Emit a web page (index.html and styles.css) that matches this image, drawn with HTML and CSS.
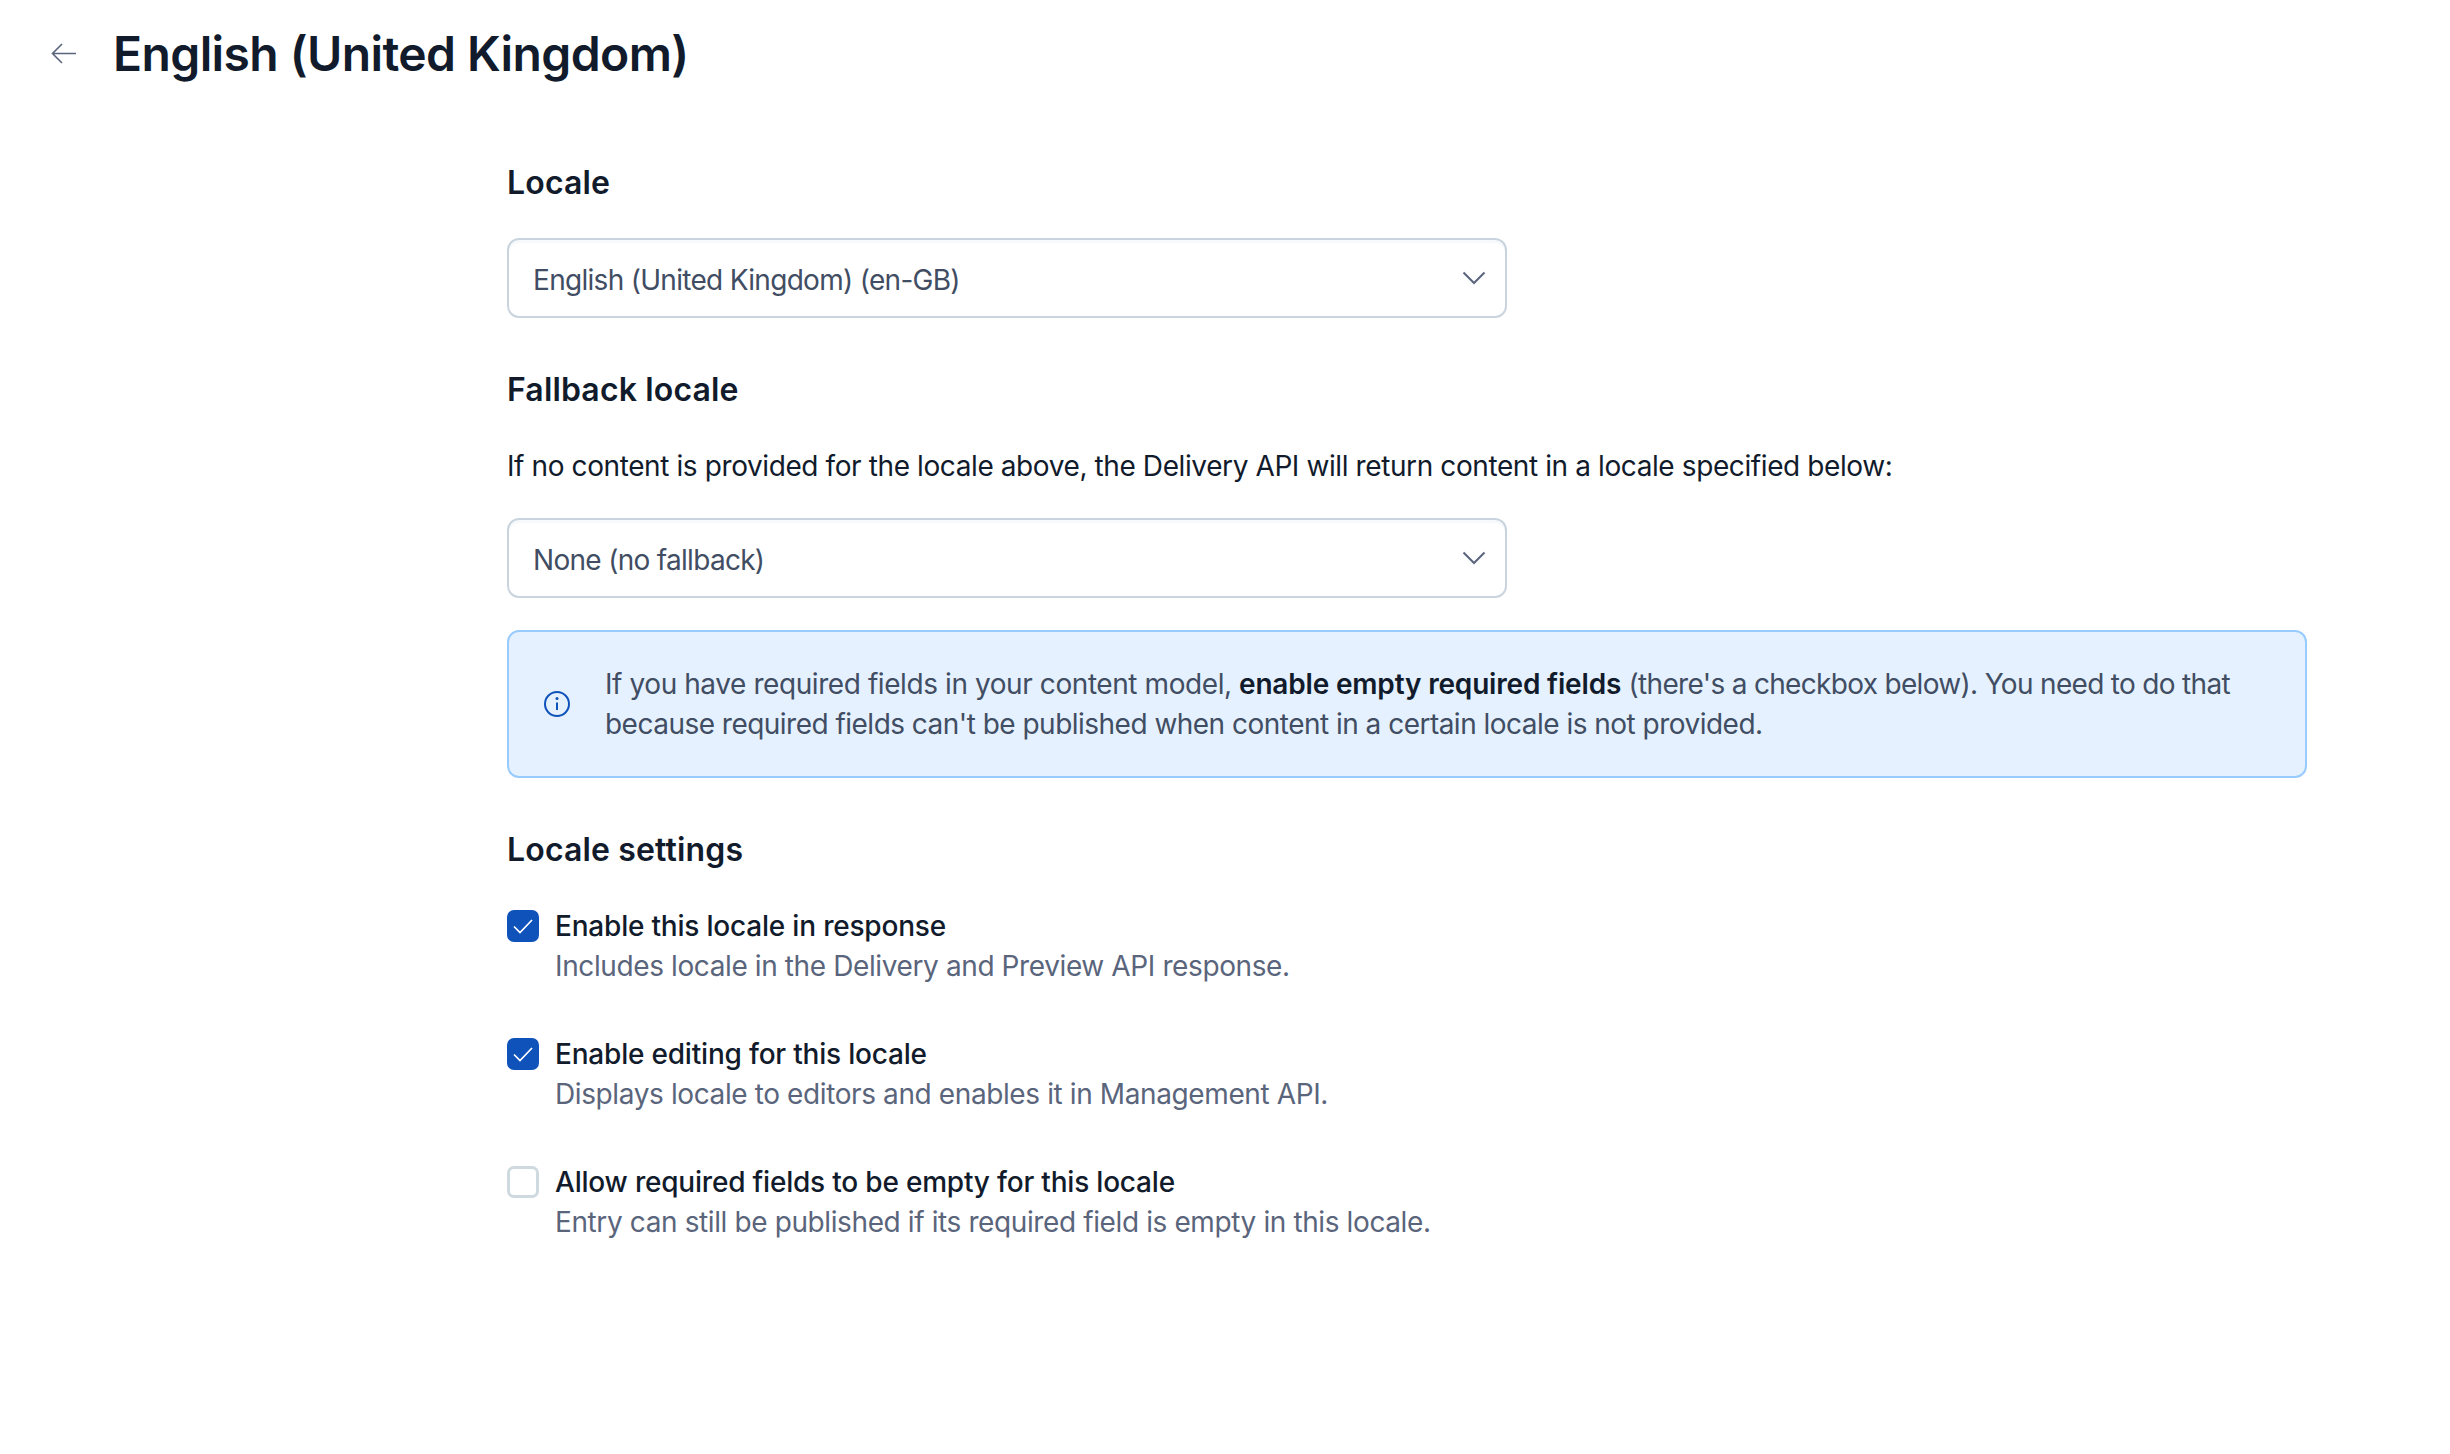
FILE: index.html
```html
<!DOCTYPE html>
<html lang="en">
<head>
<meta charset="utf-8">
<title>English (United Kingdom)</title>
<link rel="stylesheet" href="styles.css">
</head>
<body>
<header class="top">
  <svg class="back" viewBox="0 0 32 32" fill="none"><path d="M28 15.500H4.500M14 6L4.500 15.500l9.500 9.500" stroke="#5a657c" stroke-width="1.600"/></svg>
  <h1 class="title">English (United Kingdom)</h1>
</header>
<main class="form">
  <h2 class="head head-first">Locale</h2>
  <div class="select"><span>English (United Kingdom) (en-GB)</span><svg class="chev" viewBox="0 0 24 14" fill="none"><path d="M1.500 1.500L12 12 22.500 1.500" stroke="#5a657c" stroke-width="2"/></svg></div>
  <h2 class="head head-fallback">Fallback locale</h2>
  <p class="intro">If no content is provided for the locale above, the Delivery API will return content in a locale specified below:</p>
  <div class="select"><span>None (no fallback)</span><svg class="chev" viewBox="0 0 24 14" fill="none"><path d="M1.500 1.500L12 12 22.500 1.500" stroke="#5a657c" stroke-width="2"/></svg></div>
  <div class="note">
    <svg class="info" viewBox="0 0 28 28" fill="none"><circle cx="14" cy="14" r="12" stroke="#0f52ba" stroke-width="2"/><path d="M14 12.500V20" stroke="#0f52ba" stroke-width="2"/><circle cx="14" cy="8.500" r="1.500" fill="#0f52ba"/></svg>
    <p class="note-text"><span class="note-lead">If you have required fields in your content model,</span> <strong>enable empty required fields</strong> <span class="note-tail">(there's a checkbox below). You need to do that</span> because required fields can't be published when content in a certain locale is not provided.</p>
  </div>
  <h2 class="head head-settings">Locale settings</h2>
  <div class="options">
    <div class="option">
      <span class="box checked"><svg viewBox="0 0 32 32" fill="none"><path d="M7 16.500l6 6L25 10" stroke="#fff" stroke-width="1.700"/></svg></span>
      <div><div class="opt-label">Enable this locale in response</div><div class="opt-help">Includes locale in the Delivery and Preview API response.</div></div>
    </div>
    <div class="option">
      <span class="box checked"><svg viewBox="0 0 32 32" fill="none"><path d="M7 16.500l6 6L25 10" stroke="#fff" stroke-width="1.700"/></svg></span>
      <div><div class="opt-label">Enable editing for this locale</div><div class="opt-help">Displays locale to editors and enables it in Management API.</div></div>
    </div>
    <div class="option">
      <span class="box"></span>
      <div><div class="opt-label">Allow required fields to be empty for this locale</div><div class="opt-help">Entry can still be published if its required field is empty in this locale.</div></div>
    </div>
  </div>
</main>
</body>
</html>
```
FILE: styles.css
```css
* { box-sizing: border-box; }
html, body { margin: 0; background: #fff; }
body { font-family: Inter, "Noto Sans", sans-serif; color: #111b2b; font-size: 28px; line-height: 40px; height: 1454px; overflow: hidden; }
.top { display: flex; align-items: center; height: 108px; padding-left: 48px; }
.back { width: 32px; height: 32px; flex: none; }
.title { margin: 0 0 0 33px; font-size: 48px; line-height: 56px; font-weight: 600; letter-spacing: -0.6px; }
.form { padding-left: 507px; width: 2307px; }
.head { margin: 0; font-size: 32px; line-height: 48px; font-weight: 600; letter-spacing: 0.15px; }
.head-first { margin-top: 51px; margin-bottom: 31px; }
.head-fallback { margin-top: 48px; margin-bottom: 32px; }
.head-settings { margin-top: 48px; margin-bottom: 32px; }
.intro { margin: 0 0 32px; letter-spacing: -0.4px; }
.select { width: 1000px; height: 80px; border: 2px solid #cad4df; border-radius: 12px; box-shadow: inset 0 3px 0 #f7f9fa; display: flex; align-items: center; justify-content: space-between; padding: 3px 19px 0 24px; color: #414d63; letter-spacing: -0.7px; }
.chev { width: 24px; height: 14px; margin-top: -3px; }
.note { display: flex; align-items: center; height: 148px; margin-top: 32px; background: #e5f1fe; border: 2px solid #98cbff; border-radius: 12px; padding: 0 48px 0 34px; color: #414d63; letter-spacing: -0.52px; }
.info { width: 28px; height: 28px; flex: none; margin-right: 34px; }
.note-text { margin: 0; }
.note-lead { letter-spacing: -0.42px; }
.note-tail { letter-spacing: -0.68px; }
.note-text strong { color: #111b2b; font-weight: 600; letter-spacing: -0.18px; }
.options { display: flex; flex-direction: column; gap: 48px; }
.option { display: flex; gap: 16px; }
.box { width: 32px; height: 32px; flex: none; border-radius: 7px; border: 3px solid #cfd9e0; margin-top: 4px; }
.box.checked { background: #0f52ba; border: 0; }
.box svg { display: block; width: 32px; height: 32px; }
.opt-label { font-weight: 500; letter-spacing: -0.2px; }
.opt-help { color: #5a657c; letter-spacing: -0.39px; }
```
